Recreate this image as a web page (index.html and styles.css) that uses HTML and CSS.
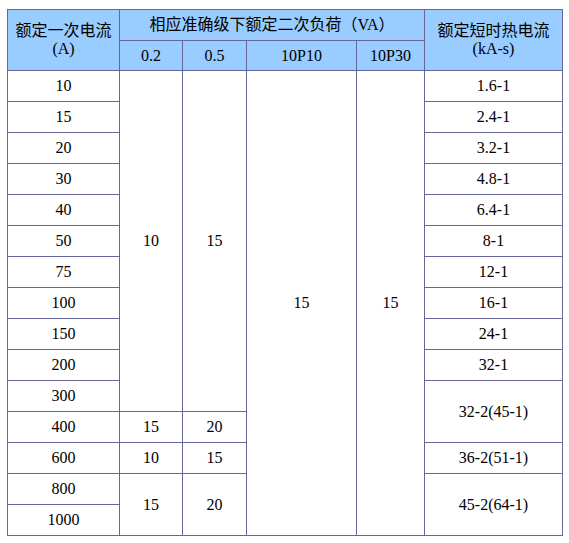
FILE: index.html
```html
<!DOCTYPE html>
<html>
<head>
<meta charset="utf-8">
<link rel="stylesheet" href="styles.css">
</head>
<body>
<table class="spec">
  <colgroup>
    <col class="c1"><col class="c2"><col class="c3"><col class="c4"><col class="c5"><col class="c6">
  </colgroup>
  <thead>
    <tr class="h1">
      <th rowspan="2">额定一次电流<br>(A)</th>
      <th colspan="4">相应准确级下额定二次负荷（VA）</th>
      <th rowspan="2">额定短时热电流<br>(kA-s)</th>
    </tr>
    <tr class="h2">
      <th>0.2</th><th>0.5</th><th>10P10</th><th>10P30</th>
    </tr>
  </thead>
  <tbody>
    <tr><td>10</td><td rowspan="11">10</td><td rowspan="11">15</td><td rowspan="15">15</td><td rowspan="15">15</td><td>1.6-1</td></tr>
    <tr><td>15</td><td>2.4-1</td></tr>
    <tr><td>20</td><td>3.2-1</td></tr>
    <tr><td>30</td><td>4.8-1</td></tr>
    <tr><td>40</td><td>6.4-1</td></tr>
    <tr><td>50</td><td>8-1</td></tr>
    <tr><td>75</td><td>12-1</td></tr>
    <tr><td>100</td><td>16-1</td></tr>
    <tr><td>150</td><td>24-1</td></tr>
    <tr><td>200</td><td>32-1</td></tr>
    <tr><td>300</td><td rowspan="2">32-2(45-1)</td></tr>
    <tr><td>400</td><td>15</td><td>20</td></tr>
    <tr><td>600</td><td>10</td><td>15</td><td>36-2(51-1)</td></tr>
    <tr><td>800</td><td rowspan="2">15</td><td rowspan="2">20</td><td rowspan="2">45-2(64-1)</td></tr>
    <tr><td>1000</td></tr>
  </tbody>
</table>
</body>
</html>
```

FILE: styles.css
```css
html, body {
  margin: 0;
  padding: 0;
  background: #ffffff;
}
body {
  padding: 9px 0 0 7px;
  font-family: "Liberation Serif", "Noto Sans CJK SC", serif;
  font-size: 16px;
  color: #000000;
}
.spec {
  border-collapse: collapse;
  table-layout: fixed;
  width: 555px;
}
.c1 { width: 112px; }
.c2 { width: 63px; }
.c3 { width: 64px; }
.c4 { width: 110px; }
.c5 { width: 68px; }
.c6 { width: 138px; }
.spec th, .spec td {
  border: 1px solid #666699;
  padding: 0;
  text-align: center;
  vertical-align: middle;
  font-weight: normal;
  line-height: 18px;
}
.spec th {
  background: #99ccff;
}
.h1 th { height: 30px; }
.h2 th { height: 29px; }
.spec td { height: 30px; }
```
